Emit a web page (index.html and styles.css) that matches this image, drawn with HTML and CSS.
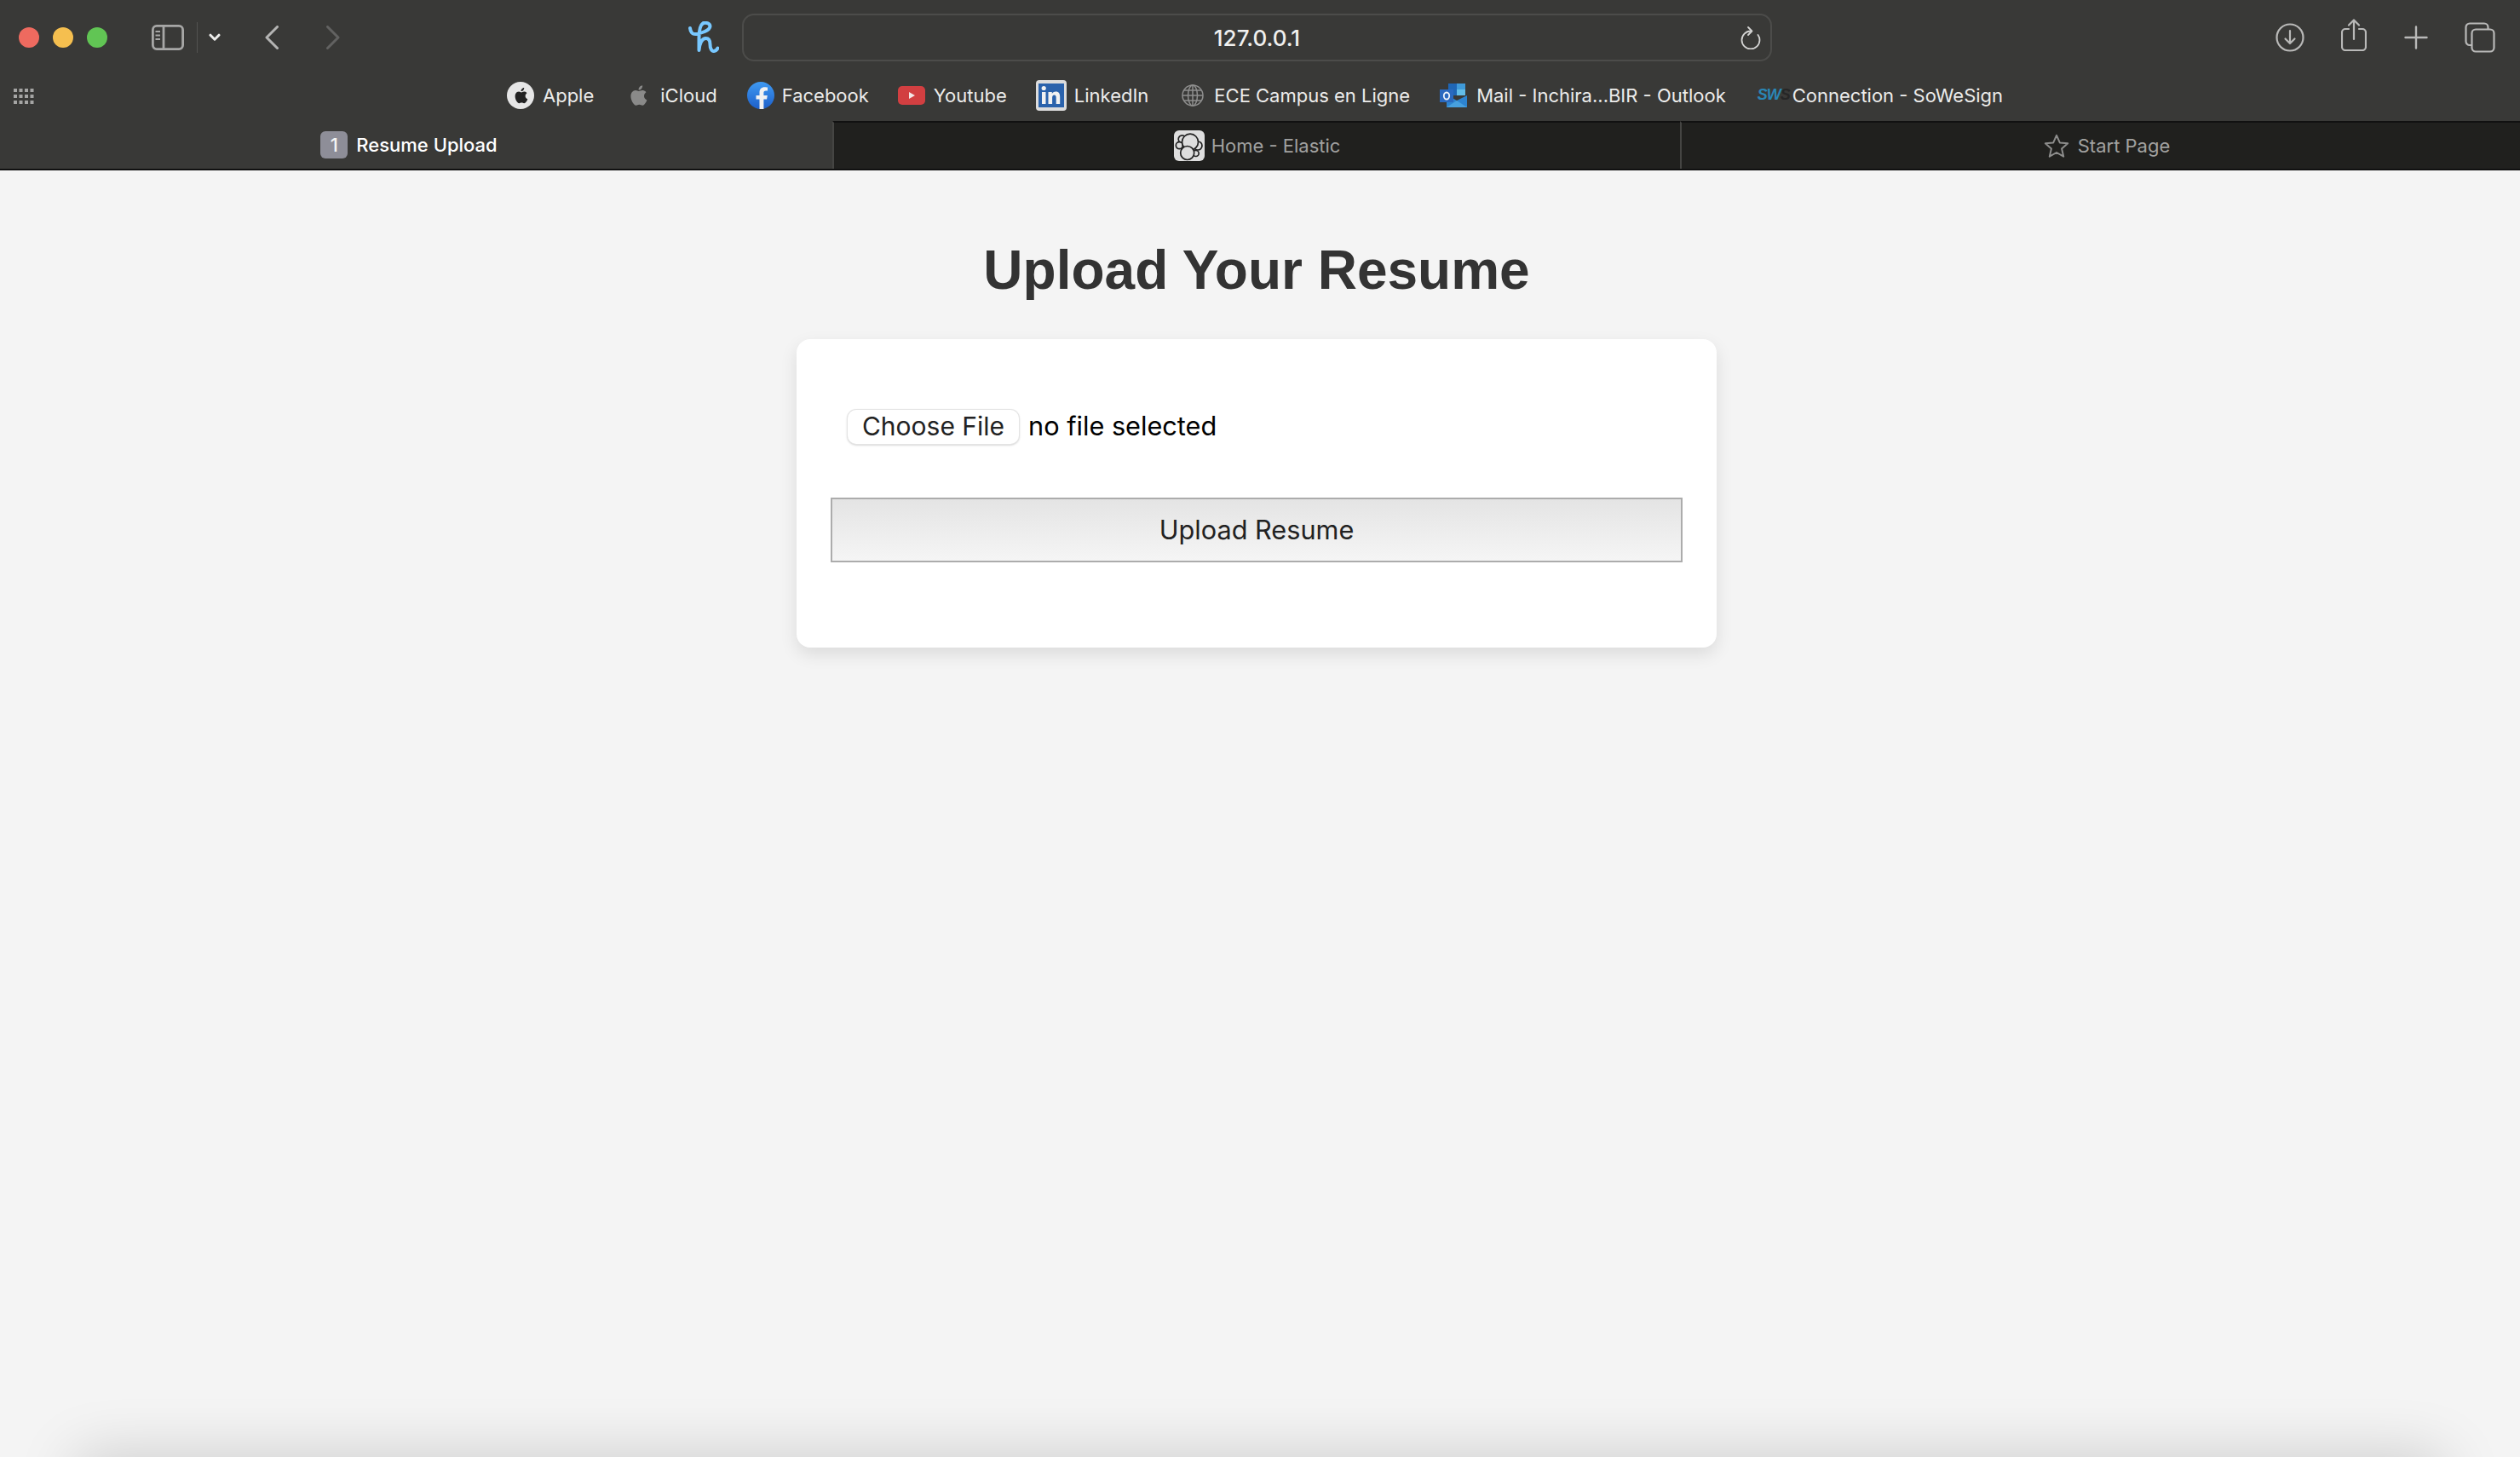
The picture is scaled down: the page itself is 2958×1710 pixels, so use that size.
FILE: index.html

```html
<!doctype html>
<html lang="en">
<head>
  <meta charset="UTF-8">
  <title>Resume Upload</title>
  <link rel="stylesheet" href="styles.css">
</head>
<body>
  <header class="chrome">
    <div class="toolbar">
      <div class="lights">
        <span class="light red"></span>
        <span class="light yellow"></span>
        <span class="light green"></span>
      </div>
      <svg class="ico sidebar" width="38" height="30" viewBox="0 0 38 30" fill="none" stroke="#a7a7a6" stroke-width="2.800">
        <rect x="1.400" y="1.400" width="35.200" height="27.200" rx="4.500"/>
        <path d="M14 1.400v27.200"/>
        <path d="M4.500 8h5.500M4.500 12.500h5.500M4.500 17h5.500" stroke-width="1.800"/>
      </svg>
      <span class="split"></span>
      <svg class="ico caret" width="14" height="10" viewBox="0 0 14 10" fill="none" stroke="#ececeb" stroke-width="3" stroke-linecap="round" stroke-linejoin="round">
        <path d="M2 2.200l5 5 5-5"/>
      </svg>
      <svg class="ico back" width="16" height="28" viewBox="0 0 16 28" fill="none" stroke="#b4b4b3" stroke-width="3" stroke-linecap="round" stroke-linejoin="round">
        <path d="M14.500 1.500L2 14l12.500 12.500"/>
      </svg>
      <svg class="ico forward" width="16" height="28" viewBox="0 0 16 28" fill="none" stroke="#626261" stroke-width="3" stroke-linecap="round" stroke-linejoin="round">
        <path d="M1.500 1.500L14 14 1.500 26.500"/>
      </svg>
      <svg class="ico hlogo" width="36" height="38" viewBox="0 0 36 38" fill="none" stroke="#78c8ff" stroke-width="4" stroke-linecap="round" stroke-linejoin="round">
        <path d="M2 8C2.500 13 5 15.500 9 15C15 14 25 11 25.500 6C25.500 2.500 20 .5 17 2.500C13 5 12.500 12 12.500 20L12.500 34C13 26 16 20 20.500 20C25 20 25.500 24 25.500 27C25.500 31 27 35.500 30 35C32 34.700 33.500 33.500 34.500 31.500"/>
      </svg>
      <div class="address">
        <span class="url">127.0.0.1</span>
        <svg class="reload" width="24" height="28" viewBox="0 0 24 28" fill="none" stroke="#d4d4d3" stroke-width="1.800" stroke-linecap="round" stroke-linejoin="round">
          <path d="M12 6.500a10.500 10.500 0 1 0 10.500 10.500c0-2.500-.8-4.500-2-6"/>
          <path d="M9 2l4.500 4.500L9 11"/>
        </svg>
      </div>
      <div class="actions">
        <svg class="ico" width="34" height="34" viewBox="0 0 34 34" fill="none" stroke="#b9b9b8" stroke-width="2.200" stroke-linecap="round" stroke-linejoin="round">
          <circle cx="17" cy="17" r="15.500"/>
          <path d="M17 9v15M11.500 18.500L17 24l5.500-5.500"/>
        </svg>
        <svg class="ico share" width="30" height="38" viewBox="0 0 30 38" fill="none" stroke="#b9b9b8" stroke-width="2.200" stroke-linecap="round" stroke-linejoin="round">
          <path d="M9 12H5a4 4 0 0 0-4 4v17a4 4 0 0 0 4 4h20a4 4 0 0 0 4-4V16a4 4 0 0 0-4-4h-4"/>
          <path d="M15 24V2M9 7.500L15 1.500l6 6"/>
        </svg>
        <svg class="ico plus" width="28" height="28" viewBox="0 0 28 28" fill="none" stroke="#b9b9b8" stroke-width="2.400" stroke-linecap="round">
          <path d="M14 1.500v25M1.500 14h25"/>
        </svg>
        <svg class="ico" width="36" height="36" viewBox="0 0 36 36" fill="none" stroke="#b9b9b8" stroke-width="2.200" stroke-linejoin="round">
          <path d="M8 27H6a4.500 4.500 0 0 1-4.500-4.500V6A4.500 4.500 0 0 1 6 1.500h17A4.500 4.500 0 0 1 27.500 6v2"/>
          <rect x="8.500" y="8.500" width="26" height="26" rx="4.500"/>
        </svg>
      </div>
    </div>

    <nav class="bookmarks">
      <svg class="grid-ico" width="24" height="18" viewBox="0 0 24 18" fill="#a5a5a4">
        <rect x="0" y="0" width="4" height="4"/><rect x="6.500" y="0" width="4" height="4"/><rect x="13" y="0" width="4" height="4"/><rect x="19.500" y="0" width="4" height="4"/>
        <rect x="0" y="7" width="4" height="4"/><rect x="6.500" y="7" width="4" height="4"/><rect x="13" y="7" width="4" height="4"/><rect x="19.500" y="7" width="4" height="4"/>
        <rect x="0" y="14" width="4" height="4"/><rect x="6.500" y="14" width="4" height="4"/><rect x="13" y="14" width="4" height="4"/><rect x="19.500" y="14" width="4" height="4"/>
      </svg>
      <div class="marks">
        <a class="mark m-apple">
          <svg width="32" height="32" viewBox="0 0 32 32"><circle cx="16" cy="16" r="16" fill="#e6e6e6"/><path fill="#222" d="M21.600 16.800c0-2.300 1.800-3.400 1.900-3.500-1-1.500-2.600-1.700-3.200-1.700-1.400-.1-2.600.8-3.300.8s-1.800-.8-2.900-.8c-1.500 0-2.900.9-3.700 2.200-1.600 2.800-.4 6.900 1.100 9.100.8 1.100 1.700 2.300 2.900 2.300 1.100 0 1.600-.7 2.900-.7s1.700.7 2.900.7 2-1.100 2.800-2.200c.9-1.300 1.200-2.500 1.300-2.600-.1 0-2.700-1-2.700-3.800z"/><path fill="#222" d="M19.300 9.900c.6-.8 1-1.800.9-2.900-.9 0-2 .6-2.700 1.400-.6.700-1.100 1.700-1 2.700 1 .1 2.100-.5 2.800-1.200z"/></svg>
          <span>Apple</span>
        </a>
        <a class="mark m-icloud">
          <svg width="22" height="26" viewBox="0 0 22 26"><path fill="#8a8a89" d="M18 13.800c0-3 2.400-4.400 2.500-4.500-1.400-2-3.500-2.300-4.200-2.300-1.800-.2-3.500 1-4.400 1s-2.300-1-3.800-1C6.200 7 4.400 8.100 3.400 9.800c-2.100 3.600-.5 9 1.500 11.900 1 1.400 2.200 3 3.700 3 1.500-.1 2-1 3.800-1s2.300 1 3.800 1 2.600-1.400 3.500-2.900c1.200-1.700 1.600-3.300 1.700-3.400-.1 0-3.400-1.300-3.400-4.600z"/><path fill="#8a8a89" d="M15 5c.8-1 1.300-2.300 1.200-3.700-1.100.1-2.600.8-3.400 1.800-.7.900-1.400 2.200-1.200 3.500 1.300.1 2.600-.6 3.400-1.600z"/></svg>
          <span>iCloud</span>
        </a>
        <a class="mark m-fb">
          <svg width="32" height="32" viewBox="0 0 32 32"><defs><linearGradient id="fbg" x1="0" y1="0" x2="0" y2="1"><stop offset="0" stop-color="#3f9af2"/><stop offset="1" stop-color="#1d5fc9"/></linearGradient></defs><circle cx="16" cy="16" r="16" fill="url(#fbg)"/><path fill="#f2f2f2" d="M19.400 32V20.500h3.700l.7-4.600h-4.400V13c0-1.300.6-2.500 2.600-2.500h2V6.600s-1.800-.3-3.500-.3c-3.600 0-6 2.200-6 6.100v3.500H10.500v4.600h4V32z"/></svg>
          <span>Facebook</span>
        </a>
        <a class="mark m-yt">
          <svg width="32" height="22" viewBox="0 0 32 22"><rect width="32" height="22" rx="5" fill="#d23f41"/><path fill="#f3e6e6" d="M13 7l7 4-7 4z"/></svg>
          <span>Youtube</span>
        </a>
        <a class="mark m-in">
          <svg width="36" height="36" viewBox="0 0 36 36"><rect width="36" height="36" rx="4" fill="#dcdcdc"/><rect x="3" y="4" width="30" height="28" fill="#2a62ac"/><rect x="7" y="14" width="4.500" height="14" fill="#f2f2f2"/><circle cx="9.200" cy="9.500" r="2.600" fill="#f2f2f2"/><path fill="#f2f2f2" d="M14.500 14h4.300v2c.8-1.300 2.300-2.400 4.400-2.400 4 0 5 2.600 5 6.100V28h-4.500v-7.300c0-1.700-.4-3.200-2.200-3.200s-2.400 1.400-2.400 3.100V28h-4.600z"/></svg>
          <span>LinkedIn</span>
        </a>
        <a class="mark m-globe">
          <svg width="26" height="26" viewBox="0 0 26 26" fill="none" stroke="#8f8f8e" stroke-width="1.500"><circle cx="13" cy="13" r="12"/><ellipse cx="13" cy="13" rx="5.500" ry="12"/><path d="M13 1v24M1 13h24M2.800 7h20.400M2.800 19h20.400"/></svg>
          <span>ECE Campus en Ligne</span>
        </a>
        <a class="mark m-mail">
          <svg width="32" height="28" viewBox="0 0 32 28"><rect x="10" y="0" width="20" height="14" fill="#1f66b5"/><rect x="20" y="0" width="10" height="7" fill="#3f9ad9"/><rect x="20" y="7" width="10" height="7" fill="#62bde8"/><path fill="#2d83cf" d="M8 13l12 7 12-6v14H8z"/><path fill="#47a0de" d="M8 28l12-8 12 8z"/><rect x="0" y="7" width="16" height="15" fill="#2a69bf"/><ellipse cx="8" cy="14.500" rx="3.200" ry="4" fill="none" stroke="#eef4fb" stroke-width="1.800"/></svg>
          <span>Mail - Inchira...BIR - Outlook</span>
        </a>
        <a class="mark m-sws">
          <span class="sws"><span class="sws-blue">SW</span>S</span>
          <span>Connection - SoWeSign</span>
        </a>
      </div>
    </nav>

    <div class="tabs">
      <div class="tab active">
        <span class="badge">1</span>
        <span>Resume Upload</span>
      </div>
      <div class="tab elastic">
        <svg width="36" height="36" viewBox="0 0 36 36" fill="#dedede" stroke="#222" stroke-width="1.700">
          <rect width="36" height="36" rx="6" stroke="none"/>
          <circle cx="9.700" cy="10.300" r="4.500"/><circle cx="6.300" cy="17.700" r="4"/><circle cx="28" cy="18" r="5"/><circle cx="25.700" cy="27" r="3.500"/><circle cx="19" cy="13.700" r="9.500"/><circle cx="15.700" cy="26.500" r="8"/>
        </svg>
        <span>Home - Elastic</span>
      </div>
      <div class="tab start">
        <svg width="30" height="28" viewBox="0 0 30 28" fill="none" stroke="#8d8d8c" stroke-width="2" stroke-linejoin="round">
          <path d="M15 1.800l3.800 8.600 9.400.9-7.100 6.200 2.100 9.200L15 22l-8.200 4.700 2.100-9.200-7.100-6.200 9.400-.9z"/>
        </svg>
        <span>Start Page</span>
      </div>
    </div>
  </header>

  <main class="page">
    <h1>Upload Your Resume</h1>
    <form class="card">
      <div class="file-row">
        <button type="button" class="choose">Choose File</button>
        <span class="nofile">no file selected</span>
      </div>
      <button type="button" class="upload">Upload Resume</button>
    </form>
    <div class="under-shadow"></div>
  </main>
</body>
</html>
```

FILE: styles.css

```css
* {
  box-sizing: border-box;
}

html, body {
  margin: 0;
  height: 1710px;
  overflow: hidden;
}

body {
  font-family: Inter, "Liberation Sans", sans-serif;
  background: #f4f4f4;
  display: flex;
  flex-direction: column;
}

svg {
  display: block;
  flex: none;
}

/* browser chrome */
.chrome {
  background: #393937;
  flex: none;
}

.toolbar {
  height: 88px;
  display: flex;
  align-items: center;
  padding-left: 22px;
}

.lights {
  display: flex;
  gap: 16px;
  margin-right: 52px;
}

.light {
  width: 24px;
  height: 24px;
  border-radius: 50%;
}

.red { background: #ee6a5f; }
.yellow { background: #f5bf4f; }
.green { background: #61c554; }

.split {
  width: 1px;
  height: 36px;
  margin: 0 13px 0 15px;
  background: #525250;
}

.back { margin-left: 52px; }
.forward { margin-left: 56px; }
.hlogo { margin-left: 409px; }

.address {
  width: 1209px;
  height: 56px;
  margin-left: 27px;
  border: 2px solid #4c4c4a;
  border-radius: 14px;
  display: flex;
  align-items: center;
  justify-content: center;
  position: relative;
}

.url {
  color: #f0f0ef;
  font-size: 26px;
  font-weight: 500;
}

.reload {
  position: absolute;
  right: 11px;
  top: 12px;
}

.actions {
  display: flex;
  align-items: center;
  margin-left: 591px;
}

.actions .share { margin-left: 43px; margin-top: -6px; }
.actions .plus { margin-left: 44px; }
.actions .plus + svg { margin-left: 43px; }

.bookmarks {
  height: 54px;
  display: flex;
  align-items: center;
  padding-left: 16px;
}

.grid-ico { margin-top: -4px; }

.marks {
  display: flex;
  align-items: center;
  margin-left: 555px;
  margin-top: -7px;
  color: #ececeb;
  font-size: 22px;
}

.mark {
  display: flex;
  align-items: center;
  gap: 11px;
}

.m-apple { gap: 10px; }
.m-icloud { margin-left: 41px; gap: 15px; }
.m-fb { margin-left: 35px; gap: 9px; }
.m-yt { margin-left: 34px; gap: 10px; }
.m-in { margin-left: 34px; gap: 9px; }
.m-globe { margin-left: 39px; gap: 12px; }
.m-mail { margin-left: 35px; }
.m-sws { margin-left: 37px; gap: 12px; }

.sws {
  width: 29px;
  font-family: "Liberation Sans", sans-serif;
  font-size: 18px;
  font-weight: bold;
  font-style: italic;
  letter-spacing: -1px;
  color: #262626;
  white-space: nowrap;
}

.sws-blue { color: #2a86b5; }

.tabs {
  height: 58px;
  display: grid;
  grid-template-columns: 977px 995px 1fr;
  border-bottom: 2px solid #111;
}

.tab {
  background: #20201e;
  color: #a1a1a0;
  font-size: 22px;
  display: flex;
  align-items: center;
  justify-content: center;
  gap: 10px;
  border-top: 2px solid #111;
  border-left: 2px solid #454543;
}

.tab.active {
  background: #393937;
  color: #fff;
  font-weight: 500;
  padding-right: 17px;
  border: 0;
}

.tab.elastic { gap: 8px; }
.tab.start { padding-left: 14px; }

.badge {
  width: 32px;
  height: 32px;
  border-radius: 6px;
  background: #8e8e98;
  color: #f5f5f5;
  display: flex;
  align-items: center;
  justify-content: center;
}

/* page */
.page {
  flex: 1;
  position: relative;
  display: flex;
  flex-direction: column;
  align-items: center;
  padding-right: 8px;
}

h1 {
  margin: 80px 0 0;
  height: 118px;
  font-family: "Liberation Sans", Arial, sans-serif;
  font-size: 64px;
  line-height: 74px;
  font-weight: bold;
  color: #333;
}

.card {
  width: 1080px;
  height: 362px;
  padding: 40px;
  background: #fff;
  border-radius: 16px;
  box-shadow: 0 8px 20px rgba(0, 0, 0, 0.1);
}

.file-row {
  display: flex;
  align-items: flex-start;
  padding: 43px 0 0 20px;
  height: 146px;
}

.choose {
  width: 201px;
  height: 40px;
  padding: 0 0 2px;
  border: 0;
  border-radius: 10px;
  background: #fff;
  box-shadow: 0 0 0 1px #e4e4e4, 0 1px 3px rgba(0, 0, 0, 0.3);
  color: #222;
  font-family: inherit;
  font-size: 30px;
  line-height: 36px;
}

.nofile {
  margin-left: 11px;
  color: #000;
  font-size: 30.700px;
  line-height: 38px;
}

.upload {
  display: block;
  width: 1000px;
  height: 76px;
  padding: 0 0 2px;
  border: 2px solid #acacac;
  background: linear-gradient(#e4e4e4, #f5f5f5);
  color: #222;
  font-family: inherit;
  font-size: 30.700px;
}

/* shadow of the window below, comes in at the bottom edge */
.under-shadow {
  position: absolute;
  left: 90px;
  right: 90px;
  bottom: -60px;
  height: 60px;
  box-shadow: 0 0 70px rgba(0, 0, 0, 0.18);
}
```
